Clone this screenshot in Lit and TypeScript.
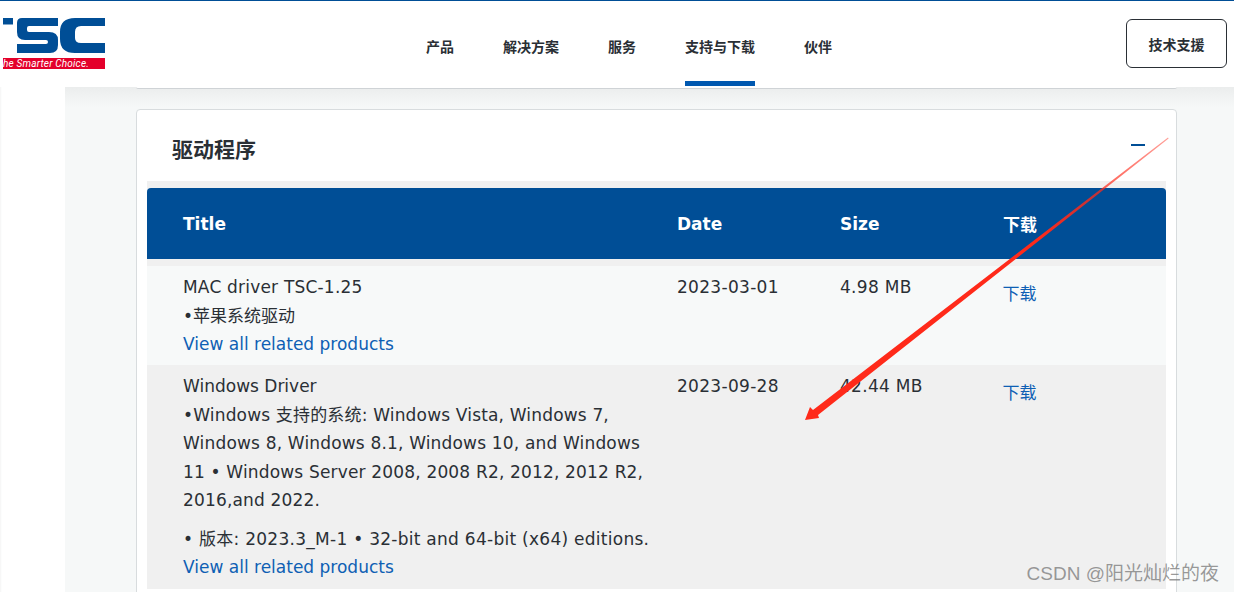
import { LitElement, html, css } from "lit";
import { customElement } from "lit/decorators.js";

const rows = [
  {
    title: "MAC driver TSC-1.25",
    desc: [html`<p class="desc">•苹果系统驱动</p>`],
    date: "2023-03-01",
    size: "4.98 MB",
  },
  {
    title: "Windows Driver",
    desc: [
      html`<p class="desc gap">•Windows 支持的系统: Windows Vista, Windows 7, Windows 8, Windows 8.1, Windows 10, and Windows 11 • Windows Server 2008, 2008 R2, 2012, 2012 R2, 2016,and 2022.</p>`,
      html`<p class="desc nowrap wide">• 版本: 2023.3_M-1 • 32-bit and 64-bit (x64) editions.</p>`,
    ],
    date: "2023-09-28",
    size: "42.44 MB",
  },
];

@customElement("app-root")
export class AppRoot extends LitElement {
  static styles = css`
    :host {
      display: block;
      position: relative;
      width: 1234px;
      height: 592px;
      overflow: hidden;
      background: #fff;
      font-family: "DejaVu Sans", "Noto Sans CJK SC", sans-serif;
      color: #2a2f35;
    }
    header {
      height: 86px;
      border-top: 1px solid #004e96;
      display: flex;
      align-items: stretch;
      background: #fff;
    }
    .logo {
      width: 402px;
      flex: none;
      position: relative;
    }
    .logo svg {
      display: block;
      margin: 17px 0 0 3px;
    }
    .logo svg.red {
      margin-top: 4px;
    }
    .tag {
      position: absolute;
      left: 3px;
      top: 57px;
      width: 102px;
      height: 11px;
      overflow: hidden;
      color: #fff;
      font: italic 10px/11px "Roboto", sans-serif;
      letter-spacing: 0.2px;
      white-space: nowrap;
    }
    nav {
      display: flex;
      gap: 49px;
      flex: none;
      margin-left: 24px;
    }
    nav a {
      display: flex;
      padding-top: 37px;
      box-sizing: border-box;
      height: 85px;
      font: 700 14px/17px "Noto Sans CJK SC", sans-serif;
      color: #2a2f35;
      border-bottom: 5px solid transparent;
    }
    nav a.active {
      border-bottom-color: #0058b0;
    }
    .support {
      margin: 18px 7px 0 auto;
      width: 99px;
      height: 47px;
      border: 1px solid #2a2f35;
      border-radius: 6px;
      display: flex;
      align-items: center;
      justify-content: center;
      font: 700 14px "Noto Sans CJK SC", sans-serif;
    }
    .body {
      display: flex;
      height: 505px;
    }
    .gutter {
      width: 65px;
      flex: none;
      background: #fff;
      box-shadow: inset 3px 0 2px -2px #f4f5f5;
    }
    main {
      flex: 1;
      background: linear-gradient(#ebeded, #f6f8f8 20px);
      padding: 0 57px 0 71px;
    }
    .prev {
      height: 1px;
      margin: 0 0 20px;
      background: #fff;
      border-bottom: 1px solid #cfd3d6;
      border-radius: 0 0 3px 3px;
    }
    .card {
      border: 1px solid #d8dcde;
      border-radius: 4px;
      background: #fff;
      padding: 0 10px;
      height: 600px;
    }
    .card-head {
      height: 67px;
      padding: 4px 21px 0 25px;
      display: flex;
      align-items: center;
      justify-content: space-between;
    }
    h2 {
      margin: 0;
      font: 700 21px "Noto Sans CJK SC", sans-serif;
      color: #2a2f35;
    }
    .minus {
      width: 14px;
      height: 2px;
      margin-top: -5px;
      background: #004e96;
    }
    .table {
      background: #f0f0f0;
      padding: 7px 0 0;
    }
    .row {
      display: grid;
      grid-template-columns: 494px 163px 163px 1fr;
      padding-left: 36px;
    }
    .thead {
      height: 71px;
      align-items: center;
      background: #004e96;
      color: #fff;
      border-radius: 4px 4px 0 0;
      font: 700 17px "DejaVu Sans", "Noto Sans CJK SC", sans-serif;
      margin-bottom: 7px;
    }
    .tr {
      font-size: 17px;
      line-height: 28.5px;
      padding-top: 7px;
      padding-bottom: 7px;
      background: #f0f0f0;
    }
    .tr.odd {
      background: #f7f9f9;
      padding-bottom: 6.5px;
    }
    .name.first {
      letter-spacing: 0.2px;
    }
    .desc {
      margin: 0;
      width: 470px;
    }
    .desc.gap {
      margin-bottom: 10px;
      letter-spacing: 0.17px;
    }
    .nowrap {
      white-space: nowrap;
    }
    .wide {
      letter-spacing: 0.27px;
    }
    .num {
      letter-spacing: 0.3px;
    }
    a.link {
      color: #0e5fb4;
      text-decoration: none;
    }
    .dl {
      padding-top: 7px;
      margin-left: -0.5px;
    }
    .arrow {
      position: absolute;
      inset: 0;
      pointer-events: none;
    }
    .mark {
      position: absolute;
      right: 15px;
      top: 558px;
      font: 19px "Liberation Sans", "Noto Sans CJK SC", sans-serif;
      color: rgba(120, 120, 120, 0.75);
      white-space: nowrap;
    }
  `;

  render() {
    return html`
      <header>
        <div class="logo">
          <svg width="102" height="36" viewBox="0 0 102 36" aria-hidden="true">
            <path fill="#004e96" d="M0 0H10V6.5H0Z" />
            <path
              fill="#004e96"
              d="M19 0H55V8H26Q24 8 24 10V12Q24 14 26 14H46Q55 14 55 22V27Q55 35 47 35H14V26H43Q45 26 45 24Q45 22 43 22H22Q14 22 14 14V5Q14 0 19 0Z"
            />
            <path
              fill="#004e96"
              d="M72 0H102V8H78Q72 8 72 14V20Q72 25 78 25H102V35H72Q57 35 57 21V14Q57 0 72 0Z"
            />
          </svg>
          <svg class="red" width="102" height="11" viewBox="0 0 102 11" aria-hidden="true">
            <rect width="102" height="11" fill="#e4002b" />
          </svg>
          <div class="tag">he Smarter Choice.</div>
        </div>
        <nav>
          <a>产品</a><a>解决方案</a><a>服务</a><a class="active">支持与下载</a><a>伙伴</a>
        </nav>
        <div class="support">技术支援</div>
      </header>
      <div class="body">
        <div class="gutter"></div>
        <main>
          <div class="prev"></div>
          <section class="card">
            <div class="card-head">
              <h2>驱动程序</h2>
              <div class="minus"></div>
            </div>
            <div class="table">
              <div class="row thead">
                <div>Title</div>
                <div>Date</div>
                <div>Size</div>
                <div>下载</div>
              </div>
              ${rows.map(
                (r, i) => html`
                  <div class="row tr ${i % 2 === 0 ? "odd" : ""}">
                    <div>
                      <div class="name ${i === 0 ? "first" : ""}">${r.title}</div>
                      ${r.desc}
                      <a class="link">View all related products</a>
                    </div>
                    <div class="num">${r.date}</div>
                    <div class="num">${r.size}</div>
                    <div class="dl"><a class="link">下载</a></div>
                  </div>
                `
              )}
            </div>
          </section>
        </main>
      </div>
      <svg class="arrow" width="1234" height="592" viewBox="0 0 1234 592" aria-hidden="true">
        <defs>
          <linearGradient id="fade" gradientUnits="userSpaceOnUse" x1="1168" y1="138" x2="1040" y2="238">
            <stop offset="0" stop-color="#ff2a1a" stop-opacity="0.45" />
            <stop offset="1" stop-color="#ff2a1a" />
          </linearGradient>
        </defs>
        <path fill="url(#fade)" d="M805 420L810 407L813 410L1168 137.6L1168.6 138.4L818 415L819 418Z" />
      </svg>
      <div class="mark">CSDN @阳光灿烂的夜</div>
    `;
  }
}
